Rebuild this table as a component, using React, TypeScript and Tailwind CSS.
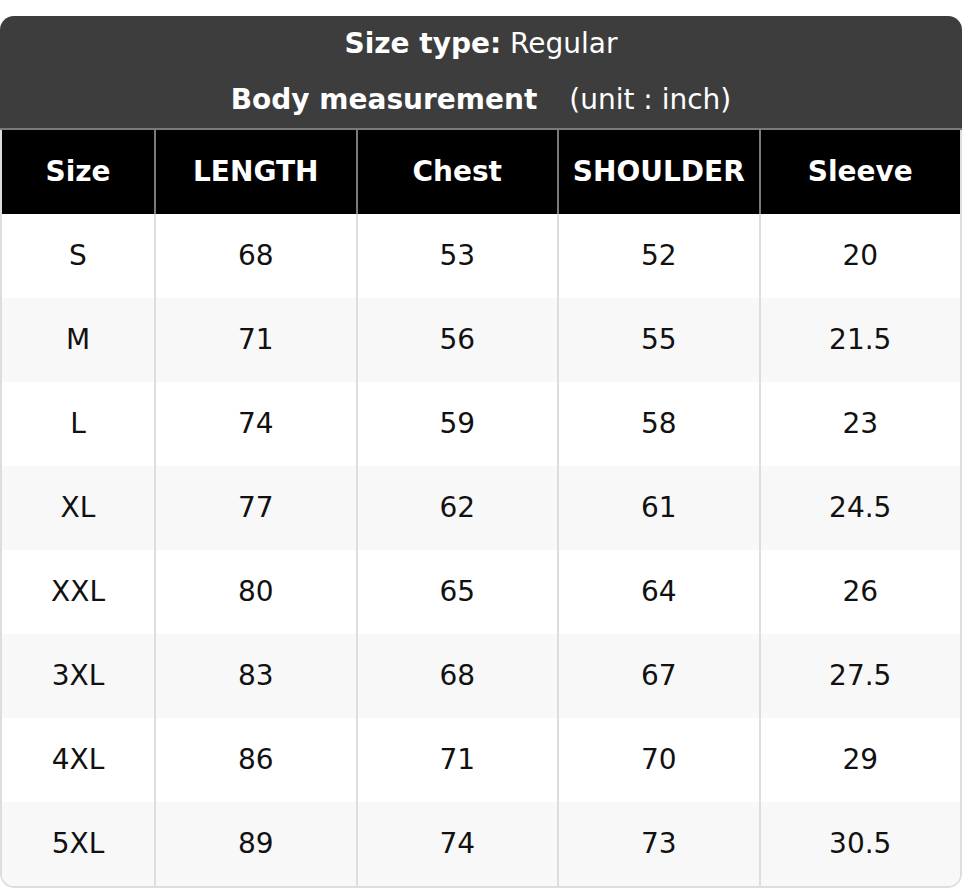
import React from "react";

const rows: string[][] = [
  ["S", "68", "53", "52", "20"],
  ["M", "71", "56", "55", "21.5"],
  ["L", "74", "59", "58", "23"],
  ["XL", "77", "62", "61", "24.5"],
  ["XXL", "80", "65", "64", "26"],
  ["3XL", "83", "68", "67", "27.5"],
  ["4XL", "86", "71", "70", "29"],
  ["5XL", "89", "74", "73", "30.5"],
];

const headers = ["Size", "LENGTH", "Chest", "SHOULDER", "Sleeve"];

export default function App() {
  return (
    <div
      className="w-[962px] h-[888px] bg-white pt-[16px]"
      style={{ fontFamily: '"DejaVu Sans", sans-serif' }}
    >
      <div className="rounded-[14px] overflow-hidden">
        <div className="bg-[#3d3d3d] text-white text-[28px] leading-none">
          <div className="h-[56px] flex items-center justify-center">
            <span className="font-bold">Size type:</span>
            <span>&nbsp;Regular</span>
          </div>
          <div className="h-[56px] flex items-center justify-center gap-[32px]">
            <span className="font-bold">Body measurement</span>
            <span>(unit : inch)</span>
          </div>
        </div>
        <div className="h-[2px] bg-[#7a7a7a]" />
        <div className="border-x-2 border-b-2 border-[#dddddd] rounded-b-[14px] overflow-hidden">
          <div className="grid grid-cols-[152px_1fr_1fr_1fr_1fr] bg-black text-white text-[28px] font-bold h-[84px] -mx-[2px] px-[2px]">
            {headers.map((h, i) => (
              <div
                key={h}
                className={
                  "flex items-center justify-center " +
                  (i > 0 ? "border-l-2 border-[#7a7a7a]" : "")
                }
              >
                {h}
              </div>
            ))}
          </div>
          {rows.map((r, ri) => (
            <div
              key={ri}
              className={
                "grid grid-cols-[152px_1fr_1fr_1fr_1fr] h-[84px] text-[28px] text-[#111111] " +
                (ri % 2 === 1 ? "bg-[#f8f8f8]" : "bg-white")
              }
            >
              {r.map((c, ci) => (
                <div
                  key={ci}
                  className={
                    "flex items-center justify-center " +
                    (ci > 0 ? "border-l-2 border-[#dddddd]" : "")
                  }
                >
                  {c}
                </div>
              ))}
            </div>
          ))}
        </div>
      </div>
    </div>
  );
}
